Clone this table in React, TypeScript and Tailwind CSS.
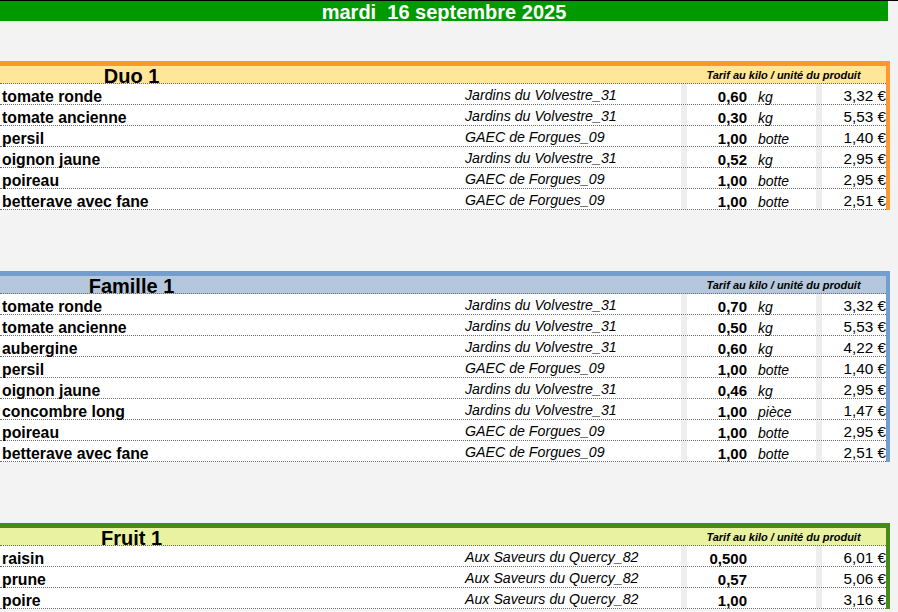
import React from 'react';

type Row = { name: string; producer: string; qty: string; unit: string; price: string };
type Section = { title: string; border: string; header: string; rows: Row[] };

const JV = 'Jardins du Volvestre_31';
const GF = 'GAEC de Forgues_09';
const SQ = 'Aux Saveurs du Quercy_82';

const sections: Section[] = [
  {
    title: 'Duo 1',
    border: 'border-[#ff972f]',
    header: 'bg-[#ffe699]',
    rows: [
      { name: 'tomate ronde', producer: JV, qty: '0,60', unit: 'kg', price: '3,32 €' },
      { name: 'tomate ancienne', producer: JV, qty: '0,30', unit: 'kg', price: '5,53 €' },
      { name: 'persil', producer: GF, qty: '1,00', unit: 'botte', price: '1,40 €' },
      { name: 'oignon jaune', producer: JV, qty: '0,52', unit: 'kg', price: '2,95 €' },
      { name: 'poireau', producer: GF, qty: '1,00', unit: 'botte', price: '2,95 €' },
      { name: 'betterave avec fane', producer: GF, qty: '1,00', unit: 'botte', price: '2,51 €' },
    ],
  },
  {
    title: 'Famille 1',
    border: 'border-[#729fcf]',
    header: 'bg-[#b4c7dc]',
    rows: [
      { name: 'tomate ronde', producer: JV, qty: '0,70', unit: 'kg', price: '3,32 €' },
      { name: 'tomate ancienne', producer: JV, qty: '0,50', unit: 'kg', price: '5,53 €' },
      { name: 'aubergine', producer: JV, qty: '0,60', unit: 'kg', price: '4,22 €' },
      { name: 'persil', producer: GF, qty: '1,00', unit: 'botte', price: '1,40 €' },
      { name: 'oignon jaune', producer: JV, qty: '0,46', unit: 'kg', price: '2,95 €' },
      { name: 'concombre long', producer: JV, qty: '1,00', unit: 'pièce', price: '1,47 €' },
      { name: 'poireau', producer: GF, qty: '1,00', unit: 'botte', price: '2,95 €' },
      { name: 'betterave avec fane', producer: GF, qty: '1,00', unit: 'botte', price: '2,51 €' },
    ],
  },
  {
    title: 'Fruit 1',
    border: 'border-[#468a1a]',
    header: 'bg-[#e8f2a1]',
    rows: [
      { name: 'raisin', producer: SQ, qty: '0,500', unit: '', price: '6,01 €' },
      { name: 'prune', producer: SQ, qty: '0,57', unit: '', price: '5,06 €' },
      { name: 'poire', producer: SQ, qty: '1,00', unit: '', price: '3,16 €' },
    ],
  },
];

const Block = ({ section }: { section: Section }) => (
  <div className={`w-[890px] border-t-[5px] border-r-[4px] ${section.border}`}>
    <div className={`flex h-[18px] border-b border-dotted border-[#6b6b6b] ${section.header}`}>
      <div className="w-[263px] pt-[2px] text-center text-[20px] font-bold leading-[17px]">{section.title}</div>
      <div className="ml-[418px] w-[205px] pt-[1px] text-center text-[11px] font-bold italic leading-[16px]">
        Tarif au kilo / unité du produit
      </div>
    </div>
    {section.rows.map((r, i) => (
      <div key={i} className="flex h-[21px] border-b border-dotted border-[#6b6b6b] bg-white">
        <div className="flex w-[463px] items-end pl-[2px] text-[15.8px] font-bold leading-[14px]">{r.name}</div>
        <div className="flex w-[218px] items-end pl-[2px] text-[14.2px] italic leading-[17px]">{r.producer}</div>
        <div className="w-[6px] bg-[#eeeeee]" />
        <div className="flex w-[62px] items-end justify-end pr-[2px] text-[15px] font-bold leading-[14px]">{r.qty}</div>
        <div className="flex w-[67px] items-end pl-[9px] text-[14px] italic leading-[13px]">{r.unit}</div>
        <div className="w-[6px] bg-[#eeeeee]" />
        <div className="flex w-[64px] items-end justify-end text-[15.3px] leading-[16px] whitespace-nowrap">{r.price}</div>
      </div>
    ))}
  </div>
);

export default function App() {
  return (
    <div className="min-h-screen bg-[#f3f3f3] font-['Liberation_Sans',Arial,sans-serif] text-black">
      <div className="h-px bg-black" />
      <div className="flex h-[20px] w-[888px] justify-center bg-[#009900] pt-[1px] text-[20px] font-bold leading-[20px] text-white whitespace-pre">
        mardi  16 septembre 2025
      </div>
      <div className="mt-[40px] flex flex-col gap-[61px]">
        {sections.map((s) => (
          <Block key={s.title} section={s} />
        ))}
      </div>
    </div>
  );
}
